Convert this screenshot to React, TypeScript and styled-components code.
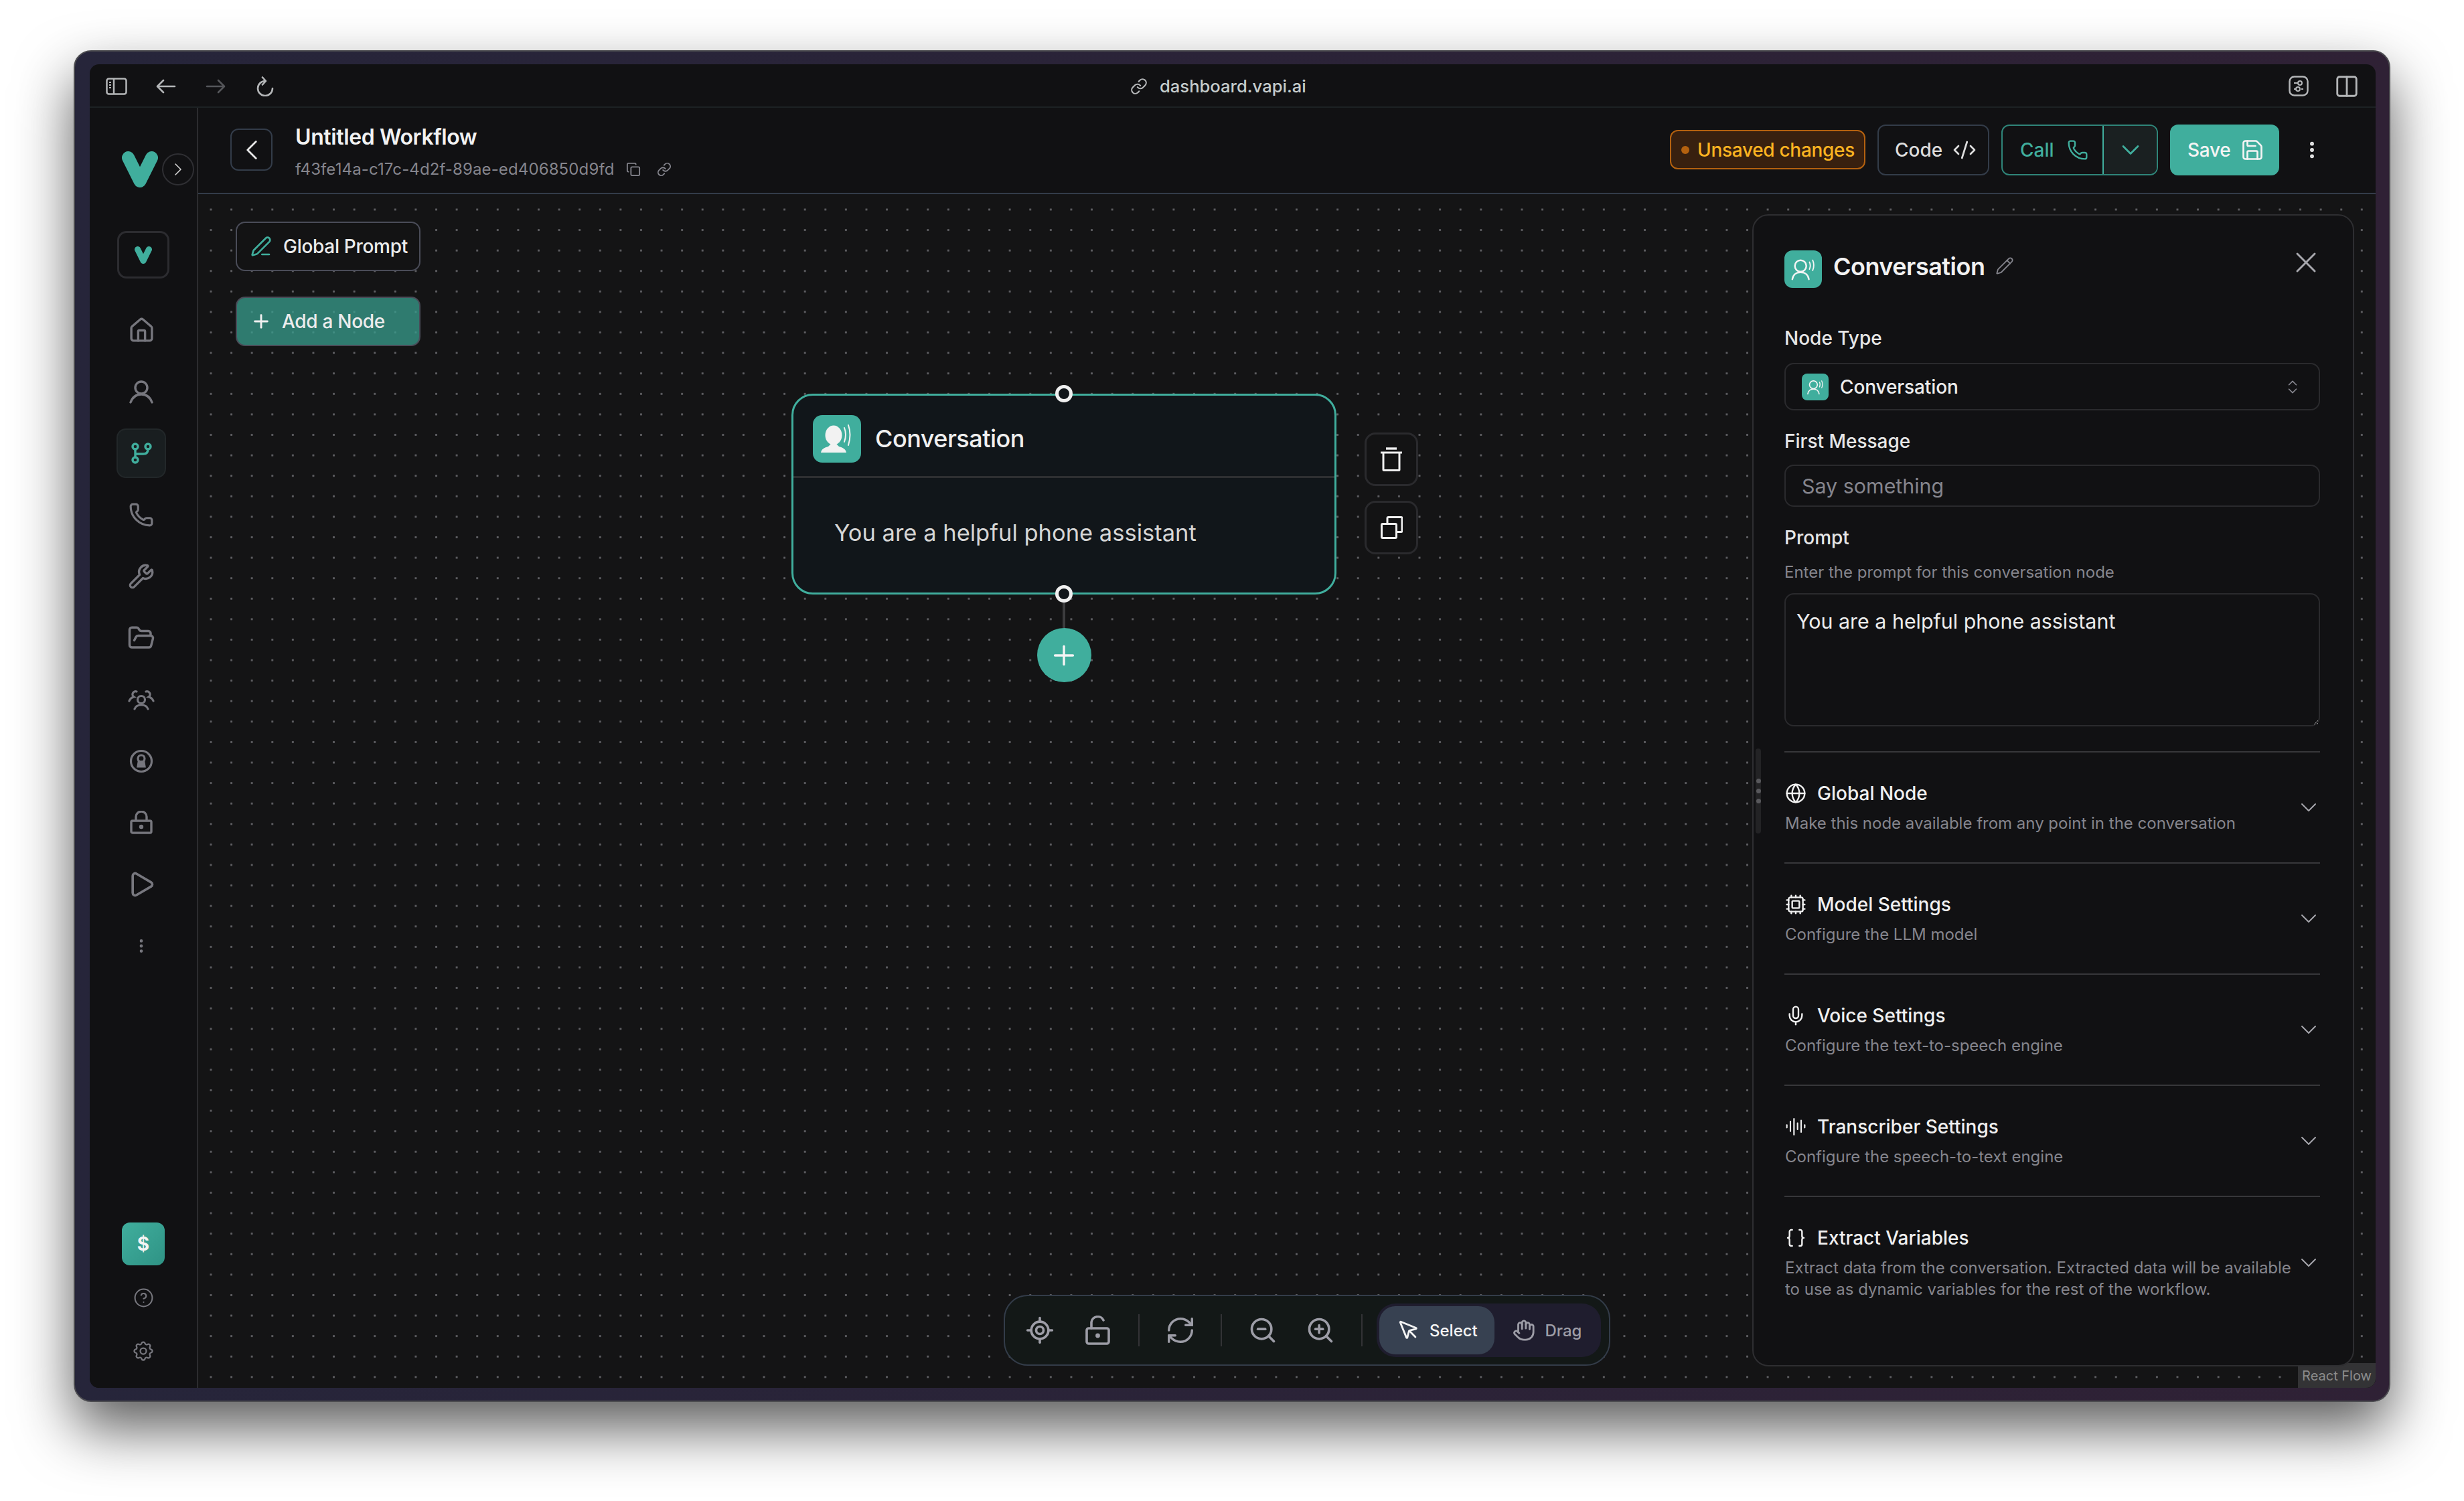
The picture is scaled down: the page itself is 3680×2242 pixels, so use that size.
import React from 'react';
import styled, { createGlobalStyle } from 'styled-components';
import {
  AudioLines,
  Braces,
  ChevronDown,
  ChevronLeft,
  ChevronRight,
  ChevronsUpDown,
  CircleHelp,
  CodeXml,
  Columns2,
  Copy,
  Cpu,
  EllipsisVertical,
  FolderOpen,
  Globe,
  Hand,
  House,
  Link,
  LocateFixed,
  Mic,
  MousePointer,
  PenLine,
  Pencil,
  Phone,
  Play,
  Plus,
  RefreshCw,
  Save,
  Wrench,
  X,
  ZoomIn,
  ZoomOut,
} from 'lucide-react';
import { TbSettings } from 'react-icons/tb';

const teal = '#40ae9d';

const GlobalStyle = createGlobalStyle`
  html, body {
    margin: 0;
    background: #fff;
  }
  * {
    box-sizing: border-box;
  }
  body {
    font-family: Inter, "Liberation Sans", sans-serif;
    -webkit-font-smoothing: antialiased;
  }
`;

const Page = styled.div`
  width: 3680px;
  height: 2242px;
  padding: 75px 0 0 110px;
  background: #fff;
  overflow: hidden;
`;

const Window = styled.div`
  width: 3460px;
  height: 2019px;
  padding: 19px 20px 19px 22px;
  border: 2px solid #4c4c50;
  border-radius: 26px;
  background: linear-gradient(90deg, #26253a, #2f2135);
  box-shadow: 0 40px 85px rgba(0, 0, 0, 0.64);
`;

const Screen = styled.div`
  display: flex;
  flex-direction: column;
  height: 100%;
  border-radius: 14px;
  background: #111113;
  overflow: hidden;
`;

const BrowserBar = styled.div`
  display: flex;
  align-items: center;
  flex: none;
  height: 65px;
  padding: 2px 24px 0 24px;
  border-bottom: 2px solid #1c2224;
`;

const BrowserIcons = styled.div<{ $gap: number }>`
  display: flex;
  align-items: center;
  gap: ${(p) => p.$gap}px;
  color: #b4b6b8;
`;

const DimIcon = styled.span`
  display: flex;
  color: #55565a;
`;

const UrlLabel = styled.div`
  display: flex;
  align-items: center;
  gap: 18px;
  margin-left: 1276px;
  margin-right: auto;
  color: #c5cccc;
  font-size: 25.6px;
  font-weight: 500;
  svg {
    color: #b4b6b8;
  }
`;

const Body = styled.div`
  display: flex;
  flex: 1;
  min-height: 0;
`;

const Sidebar = styled.aside`
  display: flex;
  flex-direction: column;
  align-items: center;
  flex: none;
  width: 162px;
  padding: 65px 0 35px;
  border-right: 2px solid #2c2c2f;
  background: #111113;
`;

const LogoRow = styled.div`
  position: relative;
  align-self: flex-start;
  height: 54px;
  margin-left: 48px;
  color: ${teal};
`;

const ExpandButton = styled.div`
  position: absolute;
  top: 3px;
  left: 60px;
  display: flex;
  align-items: center;
  justify-content: center;
  width: 48px;
  height: 48px;
  border: 2px solid #2f2f33;
  border-radius: 50%;
  color: #d4d4d4;
`;

const LogoBox = styled.div`
  display: flex;
  align-items: center;
  justify-content: center;
  width: 78px;
  height: 71px;
  margin-top: 65px;
  border: 3px solid #2c2c30;
  border-radius: 14px;
  color: ${teal};
`;

const Nav = styled.nav`
  display: flex;
  flex-direction: column;
  gap: 18px;
  margin: 40px 0 0 -6px;
`;

const NavItem = styled.div<{ $active?: boolean }>`
  display: flex;
  align-items: center;
  justify-content: center;
  width: 74px;
  height: 74px;
  border: 2px solid ${(p) => (p.$active ? '#222729' : 'transparent')};
  border-radius: 14px;
  background: ${(p) => (p.$active ? '#191e20' : 'transparent')};
  color: ${(p) => (p.$active ? teal : '#77777e')};
`;

const DollarButton = styled.div`
  display: flex;
  align-items: center;
  justify-content: center;
  width: 64px;
  height: 64px;
  margin-top: auto;
  margin-bottom: 28px;
  border-radius: 12px;
  background: linear-gradient(135deg, #40ae9d, #2f9385);
  color: #f4f4f4;
  font-size: 28px;
  font-weight: 700;
`;

const FootIcon = styled.div<{ $gapBelow?: number }>`
  display: flex;
  align-items: center;
  justify-content: center;
  height: 40px;
  margin-bottom: ${(p) => p.$gapBelow ?? 0}px;
  color: #77777e;
`;

const Main = styled.main`
  display: flex;
  flex: 1;
  flex-direction: column;
  min-width: 0;
`;

const Header = styled.header`
  display: flex;
  align-items: center;
  flex: none;
  height: 129px;
  padding: 0 79px 2px 48px;
  border-bottom: 2px solid #333c49;
`;

const BackButton = styled.div`
  display: flex;
  align-items: center;
  justify-content: center;
  width: 63px;
  height: 63px;
  border: 2px solid #333c49;
  border-radius: 12px;
  color: #e5e5e5;
`;

const TitleBlock = styled.div`
  display: flex;
  flex-direction: column;
  gap: 10px;
  margin: 5px 0 0 34px;
`;

const Title = styled.div`
  color: #f2f2f2;
  font-size: 32px;
  font-weight: 600;
  letter-spacing: -0.4px;
  line-height: 44px;
`;

const IdRow = styled.div`
  display: flex;
  align-items: center;
  color: #85858d;
  font-size: 24px;
  letter-spacing: 0.12px;
  line-height: 32px;
  svg {
    margin-left: 17px;
  }
  svg + svg {
    margin-left: 24px;
  }
`;

const HeaderActions = styled.div`
  display: flex;
  align-items: center;
  gap: 18px;
  margin-left: auto;
`;

const UnsavedBadge = styled.div`
  display: flex;
  align-items: center;
  gap: 12px;
  width: 292px;
  height: 59px;
  padding: 0 15px;
  border: 2px solid #b4610f;
  border-radius: 12px;
  background: #38200f;
  color: #fbb321;
  font-size: 28px;
  font-weight: 500;
  letter-spacing: -0.3px;
  white-space: nowrap;
`;

const UnsavedDot = styled.span`
  flex: none;
  width: 12px;
  height: 12px;
  border-radius: 50%;
  background: #b4610f;
`;

const CodeButton = styled.div`
  display: flex;
  align-items: center;
  gap: 15px;
  width: 167px;
  height: 76px;
  padding-left: 24px;
  border: 2px solid #333c49;
  border-radius: 12px;
  color: #dcdcdc;
  font-size: 28px;
  font-weight: 500;
`;

const CallGroup = styled.div`
  display: flex;
  height: 76px;
  border: 2px solid #2f8579;
  border-radius: 12px;
  overflow: hidden;
  color: ${teal};
  font-size: 28px;
  font-weight: 500;
`;

const CallMain = styled.div`
  display: flex;
  align-items: center;
  gap: 19px;
  width: 149px;
  padding-left: 26px;
`;

const CallMore = styled.div`
  display: flex;
  align-items: center;
  justify-content: center;
  width: 81px;
  border-left: 2px solid ${teal};
  background: #1a2021;
`;

const SaveButton = styled.div`
  display: flex;
  align-items: center;
  gap: 15px;
  width: 163px;
  height: 76px;
  padding-left: 26px;
  border-radius: 12px;
  background: ${teal};
  color: #f4f4f4;
  font-size: 28px;
  font-weight: 500;
  letter-spacing: -0.3px;
`;

const MoreButton = styled.div`
  display: flex;
  margin-left: 15px;
  color: #e5e5e5;
`;

const Canvas = styled.div`
  position: relative;
  flex: 1;
  background-color: #141415;
  background-image: radial-gradient(circle, #5e5e62 1.3px, transparent 2px);
  background-size: 30.6px 30.6px;
  background-position: 3.7px 7.7px;
`;

const CanvasActions = styled.div`
  position: absolute;
  top: 41px;
  left: 56px;
  display: flex;
  flex-direction: column;
  gap: 38px;
`;

const CanvasButton = styled.div<{ $primary?: boolean }>`
  display: flex;
  align-items: center;
  gap: ${(p) => (p.$primary ? '15px' : '17px')};
  width: 276px;
  height: 74px;
  padding-left: 20px;
  border: 2px solid #4a4c58;
  border-radius: 14px;
  background: ${(p) => (p.$primary ? 'rgba(56, 158, 142, 0.75)' : '#131314')};
  color: #ececec;
  font-size: 28px;
  font-weight: 500;
  letter-spacing: -0.3px;
`;

const CanvasButtonIcon = styled.span<{ $primary?: boolean }>`
  display: flex;
  justify-content: center;
  width: 32px;
  color: ${(p) => (p.$primary ? '#f0f0f0' : teal)};
`;

const NodeWrap = styled.div`
  position: absolute;
  top: 298px;
  left: 886px;
  display: flex;
  flex-direction: column;
  align-items: center;
  width: 814px;
`;

const NodeCard = styled.div`
  position: relative;
  width: 100%;
  height: 300px;
  border: 3px solid ${teal};
  border-radius: 32px;
  background: #11161a;
`;

const NodeHead = styled.div`
  display: flex;
  align-items: center;
  gap: 21px;
  height: 123px;
  padding: 8px 0 0 29px;
  border-bottom: 3px solid #2e2f31;
  color: #f0f0f0;
  font-size: 36px;
  font-weight: 500;
  letter-spacing: -0.5px;
`;

const NodeIcon = styled.div`
  display: flex;
  align-items: center;
  justify-content: center;
  width: 72px;
  height: 71px;
  border-radius: 14px;
  background: ${teal};
`;

const NodeText = styled.div`
  padding: 60px 0 0 61px;
  color: #d6d6d6;
  font-size: 34.5px;
  line-height: 44px;
`;

const NodeHandle = styled.span<{ $side: 'top' | 'bottom' }>`
  position: absolute;
  left: 50%;
  ${(p) => p.$side}: ${(p) => (p.$side === 'top' ? '-16px' : '-15px')};
  width: 26px;
  height: 26px;
  margin-left: -13px;
  border: 5px solid #f0f0f0;
  border-radius: 50%;
  background: #11161a;
`;

const Connector = styled.div`
  width: 4px;
  height: 50px;
  background: #3c3c3e;
`;

const AddNodeButton = styled.div`
  display: flex;
  align-items: center;
  justify-content: center;
  width: 81px;
  height: 81px;
  border-radius: 50%;
  background: ${teal};
  color: #f4f4f4;
`;

const NodeTools = styled.div`
  position: absolute;
  top: 58px;
  left: calc(100% + 42px);
  display: flex;
  flex-direction: column;
  gap: 22px;
`;

const NodeTool = styled.div`
  display: flex;
  align-items: center;
  justify-content: center;
  width: 80px;
  height: 80px;
  border: 3px solid #2a2a2d;
  border-radius: 16px;
  background: #131314;
  color: #f0f0f0;
`;

const Attribution = styled.div`
  position: absolute;
  right: 0;
  bottom: 0;
  display: flex;
  align-items: center;
  justify-content: center;
  width: 116px;
  height: 37px;
  background: #333335;
  color: #8c8c8c;
  font-size: 20px;
`;

const SidePanel = styled.div`
  position: absolute;
  top: 30px;
  right: 32px;
  bottom: 32px;
  width: 899px;
  padding: 52px 49px 0 46px;
  border: 2px solid #2e2e31;
  border-radius: 24px;
  background: #111113;
`;

const ResizeGrip = styled.div`
  position: absolute;
  top: 796px;
  left: 3px;
  display: flex;
  flex-direction: column;
  align-items: center;
  justify-content: center;
  gap: 8px;
  width: 8px;
  height: 127px;
  border-radius: 4px;
  background: #232325;
`;

const GripDot = styled.span`
  width: 7px;
  height: 7px;
  border-radius: 50%;
  background: #58585c;
`;

const PanelHead = styled.div`
  display: flex;
  align-items: center;
  height: 56px;
`;

const PanelIcon = styled.div`
  display: flex;
  align-items: center;
  justify-content: center;
  flex: none;
  width: 56px;
  height: 56px;
  border-radius: 12px;
  background: ${teal};
  color: #f4f4f4;
`;

const PanelTitle = styled.div`
  margin: -8px 0 0 17px;
  color: #f2f2f2;
  font-size: 36px;
  font-weight: 600;
  letter-spacing: -0.5px;
`;

const EditIcon = styled.span`
  display: flex;
  margin: -10px 0 0 16px;
  color: #85858d;
`;

const CloseIcon = styled.span`
  display: flex;
  align-self: flex-start;
  margin: -8px -5px 0 auto;
  color: #a6a6ac;
`;

const FieldLabel = styled.div<{ $gapTop: number }>`
  margin-top: ${(p) => p.$gapTop}px;
  color: #e6e6e6;
  font-size: 28px;
  font-weight: 500;
  line-height: 40px;
`;

const SelectBox = styled.div`
  display: flex;
  align-items: center;
  height: 71px;
  margin-top: 17px;
  padding: 0 26px 0 24px;
  border: 2px solid #2a2a2d;
  border-radius: 14px;
  color: #ececec;
  font-size: 28px;
  font-weight: 500;
  letter-spacing: -0.1px;
  > svg {
    margin-left: auto;
    color: #85858d;
  }
`;

const SelectIcon = styled.div`
  display: flex;
  align-items: center;
  justify-content: center;
  width: 40px;
  height: 40px;
  margin-right: 17px;
  border-radius: 8px;
  background: ${teal};
  color: #f4f4f4;
`;

const TextInput = styled.input`
  display: block;
  width: 100%;
  height: 63px;
  margin-top: 15px;
  padding: 0 24px;
  border: 2px solid #2a2a2d;
  border-radius: 14px;
  outline: none;
  background: transparent;
  color: #ececec;
  font-family: inherit;
  font-size: 30.4px;
  &::placeholder {
    color: #85858d;
    opacity: 1;
  }
`;

const HelperText = styled.div`
  margin-top: 16px;
  color: #85858d;
  font-size: 24px;
  line-height: 32px;
`;

const PromptArea = styled.textarea`
  display: block;
  width: 100%;
  height: 199px;
  margin-top: 15px;
  padding: 20px 16px;
  border: 2px solid #2a2a2d;
  border-radius: 14px;
  outline: none;
  background: transparent;
  color: #ececec;
  color-scheme: dark;
  font-family: inherit;
  font-size: 30.4px;
  line-height: 40px;
`;

const SettingsList = styled.div`
  margin-top: 37px;
`;

const SettingsRow = styled.div`
  display: flex;
  align-items: center;
  padding: 41px 0 42px;
  border-top: 2px solid #37373a;
  color: #a6a6ac;
`;

const RowContent = styled.div`
  flex: 1;
  padding-left: 1px;
`;

const RowTitle = styled.div`
  display: flex;
  align-items: center;
  gap: 16px;
  height: 40px;
  color: #f0f0f0;
  font-size: 28px;
  font-weight: 500;
`;

const RowDesc = styled.div`
  margin-top: 9px;
  color: #85858d;
  font-size: 24px;
  line-height: 32px;
`;

const RowChevron = styled.span`
  display: flex;
  margin-right: -3px;
`;

const FlowToolbar = styled.div`
  position: absolute;
  left: 1203px;
  bottom: 33px;
  display: flex;
  align-items: center;
  gap: 34.5px;
  width: 906px;
  height: 106px;
  padding-left: 26px;
  border: 2px solid #333c49;
  border-radius: 36px;
  background: #131817;
  color: #9d9da7;
`;

const ToolIcon = styled.div`
  display: flex;
  align-items: center;
  justify-content: center;
  width: 52px;
`;

const ToolDivider = styled.span`
  width: 2px;
  height: 48px;
  background: #333336;
`;

const ModeSwitch = styled.div`
  display: flex;
  align-items: center;
  width: 335px;
  height: 80px;
  margin-left: -13px;
  padding: 4px;
  border-radius: 28px;
  background: #1f1d2e;
`;

const ModeOption = styled.div<{ $active?: boolean }>`
  display: flex;
  align-items: center;
  gap: 14px;
  width: ${(p) => (p.$active ? '173px' : '155px')};
  height: 72px;
  padding-left: ${(p) => (p.$active ? '27px' : '27px')};
  border-radius: 24px;
  background: ${(p) => (p.$active ? '#374151' : 'transparent')};
  color: ${(p) => (p.$active ? '#f4f4f4' : '#9d9da7')};
  font-size: 24px;
  font-weight: 500;
`;

const SidebarToggleIcon = () => (
  <svg width="32" height="26" viewBox="0 0 32 26" fill="none" stroke="currentColor" strokeWidth="2.5">
    <rect x="1.5" y="1.5" width="29" height="23" rx="3" />
    <path d="M12 1.5v23" />
    <path d="M5 7h3M5 11h3M5 15h3" strokeWidth="2" />
  </svg>
);

const ArrowIcon = ({ flip }: { flip?: boolean }) => (
  <svg
    width="32"
    height="22"
    viewBox="0 0 32 22"
    fill="none"
    stroke="currentColor"
    strokeWidth="2.6"
    strokeLinecap="round"
    strokeLinejoin="round"
    transform={flip ? 'scale(-1 1)' : undefined}
  >
    <path d="M29 11H4M12 2 3 11l9 9" />
  </svg>
);

const ReloadIcon = () => (
  <svg width="32" height="30" viewBox="0 0 32 30" fill="none" stroke="currentColor" strokeWidth="2.6" strokeLinecap="round" strokeLinejoin="round">
    <path d="M16 7A11 11 0 1 0 27 18" />
    <path d="M12 1.5 17 7l-5 5.5" />
  </svg>
);

const PrivacyIcon = () => (
  <svg width="30" height="31" viewBox="0 0 30 31" fill="none" stroke="currentColor" strokeWidth="2.5">
    <rect x="1.5" y="1.5" width="27" height="28" rx="7" />
    <path d="M8 11h6M8 20h3M19 20h3" strokeWidth="2" />
    <circle cx="17" cy="11" r="3" strokeWidth="2" />
    <circle cx="14" cy="20" r="3" strokeWidth="2" />
  </svg>
);

const VapiMark = ({ size }: { size: number }) => (
  <svg width={size} height={size} viewBox="0 0 54 54" fill="none" stroke="currentColor" strokeWidth="19" strokeLinecap="round" strokeLinejoin="round">
    <path d="M9.5 9.5 27 44.5 44.5 9.5" />
  </svg>
);

const UserIcon = () => (
  <svg width="36" height="36" viewBox="0 0 36 36" fill="none" stroke="currentColor" strokeWidth="3.4" strokeLinecap="round">
    <circle cx="18" cy="12" r="9" />
    <path d="M2 34c3-8 9-12 16-12s13 4 16 12" />
  </svg>
);

const BranchIcon = () => (
  <svg width="32" height="32" viewBox="0 0 32 32" fill="none" stroke="currentColor" strokeWidth="3.4" strokeLinecap="round">
    <circle cx="7" cy="6" r="4" />
    <circle cx="26" cy="6" r="4" />
    <circle cx="7" cy="26" r="4" />
    <path d="M7 10v12M7 17h12q7 0 7-7" />
  </svg>
);

const PeopleIcon = () => (
  <svg width="40" height="32" viewBox="0 0 40 32" fill="none" stroke="currentColor" strokeWidth="3.2" strokeLinecap="round">
    <circle cx="20" cy="16" r="5.5" />
    <path d="M10 30q2-6 10-6t10 6" />
    <path d="M13 4a4.5 4.5 0 0 0-4 8q-5 1-7 6" />
    <path d="M27 4a4.5 4.5 0 0 1 4 8q5 1 7 6" />
  </svg>
);

const KeyholeIcon = () => (
  <svg width="36" height="36" viewBox="0 0 36 36" fill="none" stroke="currentColor" strokeWidth="3.2">
    <circle cx="18" cy="18" r="15.5" />
    <circle cx="18" cy="14" r="5" />
    <path d="M14.5 17 13 26h10l-1.5-9" fill="currentColor" />
  </svg>
);

const CaseLockIcon = () => (
  <svg width="36" height="36" viewBox="0 0 36 36" fill="none" stroke="currentColor" strokeWidth="3.4">
    <rect x="3" y="15" width="30" height="18" rx="2" />
    <path d="M10 15V9a8 8 0 0 1 16 0v6" />
    <circle cx="18" cy="24" r="1.5" fill="currentColor" />
  </svg>
);

const OpenLockIcon = () => (
  <svg width="44" height="44" viewBox="0 0 44 44" fill="none" stroke="currentColor" strokeWidth="3.6" strokeLinecap="round">
    <rect x="5" y="19" width="33" height="23" rx="3" />
    <path d="M12 19V10a9.5 9.5 0 0 1 18-3" />
    <circle cx="21.5" cy="30" r="1.6" fill="currentColor" />
  </svg>
);

const SpeechIcon = ({ size }: { size: number }) => (
  <svg width={size} height={size} viewBox="0 0 40 40" fill="none" stroke="currentColor" strokeWidth="2.6" strokeLinecap="round">
    <circle cx="16" cy="15" r="9" />
    <path d="M3 36c1-7 6-11 13-11s12 4 13 11" />
    <path d="M30 9q2.5 5 0 11M35 6q3.5 8 0 16" strokeWidth="2" />
  </svg>
);

const SpeechFilledIcon = () => (
  <svg width="52" height="52" viewBox="0 0 52 52" fill="#f2f2f2" stroke="none">
    <ellipse cx="21" cy="21" rx="12.5" ry="14.5" />
    <path d="M2 47c1-5 4-7 11-9l4-4h8l4 4c7 2 10 4 11 9z" />
    <path d="M37 10q4 10 0 21M43 6q5 14 0 30" fill="none" stroke="#f2f2f2" strokeWidth="2" strokeLinecap="round" />
  </svg>
);

const TrashIcon = () => (
  <svg width="32" height="36" viewBox="0 0 32 36" fill="none" stroke="currentColor" strokeWidth="3">
    <path d="M0 8h32" />
    <path d="M4 8v25.5a1 1 0 0 0 1 1h22a1 1 0 0 0 1-1V8" />
    <path d="M8 2h16" strokeWidth="3.4" />
  </svg>
);

const DuplicateIcon = () => (
  <svg width="33" height="34" viewBox="0 0 33 34" fill="none" stroke="currentColor" strokeWidth="3">
    <rect x="1.5" y="11.5" width="22" height="21" rx="1.5" />
    <path d="M10 11V3a1.5 1.5 0 0 1 1.5-1.5h19A1.5 1.5 0 0 1 32 3v19a1.5 1.5 0 0 1-1.5 1.5H24" />
  </svg>
);

const navItems = [
  { key: 'home', icon: <House size={41} strokeWidth={2} /> },
  { key: 'user', icon: <UserIcon /> },
  { key: 'flows', icon: <BranchIcon />, active: true },
  { key: 'phone', icon: <Phone size={38} strokeWidth={2} /> },
  { key: 'tools', icon: <Wrench size={40} strokeWidth={2} /> },
  { key: 'files', icon: <FolderOpen size={42} strokeWidth={2} /> },
  { key: 'squads', icon: <PeopleIcon /> },
  { key: 'keys', icon: <KeyholeIcon /> },
  { key: 'vault', icon: <CaseLockIcon /> },
  { key: 'play', icon: <Play size={44} strokeWidth={2} /> },
  { key: 'more', icon: <EllipsisVertical size={26} strokeWidth={2.4} /> },
];

const settingsRows = [
  { title: 'Global Node', desc: 'Make this node available from any point in the conversation', icon: <Globe size={32} strokeWidth={1.8} /> },
  { title: 'Model Settings', desc: 'Configure the LLM model', icon: <Cpu size={32} strokeWidth={1.8} /> },
  { title: 'Voice Settings', desc: 'Configure the text-to-speech engine', icon: <Mic size={32} strokeWidth={1.8} /> },
  { title: 'Transcriber Settings', desc: 'Configure the speech-to-text engine', icon: <AudioLines size={32} strokeWidth={1.6} /> },
  {
    title: 'Extract Variables',
    desc: 'Extract data from the conversation. Extracted data will be available to use as dynamic variables for the rest of the workflow.',
    icon: <Braces size={32} strokeWidth={1.8} />,
  },
];

const App: React.FC = () => (
  <Page>
    <GlobalStyle />
    <Window>
      <Screen>
        <BrowserBar>
          <BrowserIcons $gap={42}>
            <SidebarToggleIcon />
            <ArrowIcon />
            <DimIcon>
              <ArrowIcon flip />
            </DimIcon>
            <ReloadIcon />
          </BrowserIcons>
          <UrlLabel>
            <Link size={26} strokeWidth={2} />
            dashboard.vapi.ai
          </UrlLabel>
          <BrowserIcons $gap={38}>
            <PrivacyIcon />
            <Columns2 size={38} strokeWidth={1.8} />
          </BrowserIcons>
        </BrowserBar>

        <Body>
          <Sidebar>
            <LogoRow>
              <VapiMark size={54} />
              <ExpandButton>
                <ChevronRight size={32} strokeWidth={1.2} />
              </ExpandButton>
            </LogoRow>
            <LogoBox>
              <VapiMark size={26} />
            </LogoBox>
            <Nav>
              {navItems.map((item) => (
                <NavItem key={item.key} $active={item.active}>
                  {item.icon}
                </NavItem>
              ))}
            </Nav>
            <DollarButton>$</DollarButton>
            <FootIcon $gapBelow={40}>
              <CircleHelp size={31} strokeWidth={1.6} />
            </FootIcon>
            <FootIcon>
              <TbSettings size={36} strokeWidth={1.5} />
            </FootIcon>
          </Sidebar>

          <Main>
            <Header>
              <BackButton>
                <ChevronLeft size={50} strokeWidth={1.4} />
              </BackButton>
              <TitleBlock>
                <Title>Untitled Workflow</Title>
                <IdRow>
                  f43fe14a-c17c-4d2f-89ae-ed406850d9fd
                  <Copy size={22} strokeWidth={2} />
                  <Link size={22} strokeWidth={2} />
                </IdRow>
              </TitleBlock>
              <HeaderActions>
                <UnsavedBadge>
                  <UnsavedDot />
                  Unsaved changes
                </UnsavedBadge>
                <CodeButton>
                  Code
                  <CodeXml size={36} strokeWidth={1.8} />
                </CodeButton>
                <CallGroup>
                  <CallMain>
                    Call
                    <Phone size={32} strokeWidth={1.8} />
                  </CallMain>
                  <CallMore>
                    <ChevronDown size={44} strokeWidth={1.5} />
                  </CallMore>
                </CallGroup>
                <SaveButton>
                  Save
                  <Save size={36} strokeWidth={1.8} />
                </SaveButton>
                <MoreButton>
                  <EllipsisVertical size={32} strokeWidth={2.4} />
                </MoreButton>
              </HeaderActions>
            </Header>

            <Canvas>
              <CanvasActions>
                <CanvasButton>
                  <CanvasButtonIcon>
                    <PenLine size={32} strokeWidth={2} />
                  </CanvasButtonIcon>
                  Global Prompt
                </CanvasButton>
                <CanvasButton $primary>
                  <CanvasButtonIcon $primary>
                    <Plus size={48} strokeWidth={2.2} />
                  </CanvasButtonIcon>
                  Add a Node
                </CanvasButton>
              </CanvasActions>

              <NodeWrap>
                <NodeCard>
                  <NodeHandle $side="top" />
                  <NodeHead>
                    <NodeIcon>
                      <SpeechFilledIcon />
                    </NodeIcon>
                    Conversation
                  </NodeHead>
                  <NodeText>You are a helpful phone assistant</NodeText>
                  <NodeHandle $side="bottom" />
                </NodeCard>
                <Connector />
                <AddNodeButton>
                  <Plus size={46} strokeWidth={1.8} />
                </AddNodeButton>
                <NodeTools>
                  <NodeTool>
                    <TrashIcon />
                  </NodeTool>
                  <NodeTool>
                    <DuplicateIcon />
                  </NodeTool>
                </NodeTools>
              </NodeWrap>

              <Attribution>React Flow</Attribution>

              <SidePanel>
                <ResizeGrip>
                  <GripDot />
                  <GripDot />
                  <GripDot />
                </ResizeGrip>
                <PanelHead>
                  <PanelIcon>
                    <SpeechIcon size={38} />
                  </PanelIcon>
                  <PanelTitle>Conversation</PanelTitle>
                  <EditIcon>
                    <Pencil size={28} strokeWidth={1.6} />
                  </EditIcon>
                  <CloseIcon>
                    <X size={52} strokeWidth={1.4} />
                  </CloseIcon>
                </PanelHead>

                <FieldLabel $gapTop={55}>Node Type</FieldLabel>
                <SelectBox>
                  <SelectIcon>
                    <SpeechIcon size={26} />
                  </SelectIcon>
                  Conversation
                  <ChevronsUpDown size={26} strokeWidth={1.6} />
                </SelectBox>

                <FieldLabel $gapTop={26}>First Message</FieldLabel>
                <TextInput placeholder="Say something" readOnly />

                <FieldLabel $gapTop={26}>Prompt</FieldLabel>
                <HelperText>Enter the prompt for this conversation node</HelperText>
                <PromptArea readOnly defaultValue="You are a helpful phone assistant" />

                <SettingsList>
                  {settingsRows.map((row) => (
                    <SettingsRow key={row.title}>
                      <RowContent>
                        <RowTitle>
                          {row.icon}
                          {row.title}
                        </RowTitle>
                        <RowDesc>{row.desc}</RowDesc>
                      </RowContent>
                      <RowChevron>
                        <ChevronDown size={40} strokeWidth={1.2} />
                      </RowChevron>
                    </SettingsRow>
                  ))}
                </SettingsList>
              </SidePanel>

              <FlowToolbar>
                <ToolIcon>
                  <LocateFixed size={44} strokeWidth={2} />
                </ToolIcon>
                <ToolIcon>
                  <OpenLockIcon />
                </ToolIcon>
                <ToolDivider />
                <ToolIcon>
                  <RefreshCw size={46} strokeWidth={1.8} />
                </ToolIcon>
                <ToolDivider />
                <ToolIcon>
                  <ZoomOut size={44} strokeWidth={2} />
                </ToolIcon>
                <ToolIcon>
                  <ZoomIn size={44} strokeWidth={2} />
                </ToolIcon>
                <ToolDivider />
                <ModeSwitch>
                  <ModeOption $active>
                    <MousePointer size={34} strokeWidth={2} />
                    Select
                  </ModeOption>
                  <ModeOption>
                    <Hand size={34} strokeWidth={2} />
                    Drag
                  </ModeOption>
                </ModeSwitch>
              </FlowToolbar>
            </Canvas>
          </Main>
        </Body>
      </Screen>
    </Window>
  </Page>
);

export default App;
